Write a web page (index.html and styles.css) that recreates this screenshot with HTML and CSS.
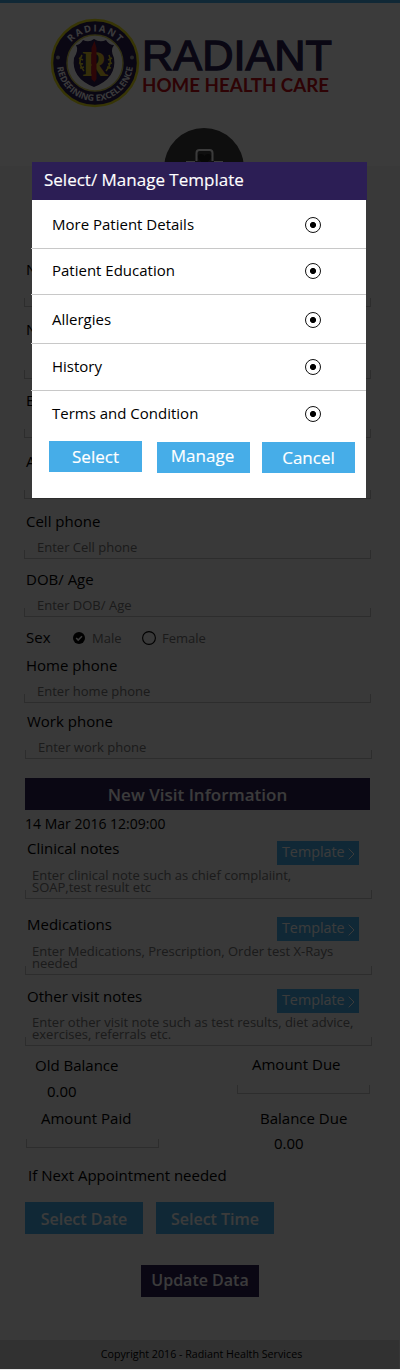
FILE: index.html
```html
<!DOCTYPE html>
<html lang="en">
<head>
<meta charset="utf-8">
<title>Radiant Home Health Care</title>
<link rel="stylesheet" href="styles.css">
</head>
<body>
<div class="page">
  <header class="header">
    <svg class="logo" width="400" height="163" viewBox="0 3 400 163">
      <defs>
        <path id="arc-top" d="M63.500 63a31.500 31.500 0 0 1 63 0"/>
        <path id="arc-bottom" d="M57 63a38 38 0 0 0 76 0"/>
      </defs>
      <circle cx="95" cy="63" r="43" fill="#2c1e55" stroke="#eee51c" stroke-width="2.500"/>
      <circle cx="95" cy="63" r="28" fill="#fff" stroke="#d6cf56" stroke-width="1.500"/>
      <circle cx="58" cy="57.500" r="2" fill="#aaa"/>
      <circle cx="132" cy="57.500" r="2" fill="#aaa"/>
      <text class="seal-text"><textPath href="#arc-top" startOffset="50%" text-anchor="middle" textLength="54">RADIANT</textPath></text>
      <text class="seal-text seal-small"><textPath href="#arc-bottom" startOffset="50%" text-anchor="middle" textLength="111" lengthAdjust="spacingAndGlyphs">REDEFINING EXCELLENCE</textPath></text>
      <path d="M76 45q4 0 7-5q6 3 11-1q6 4 12 1q3 5 8 5q-4 5 0 13q3 20-20 29q-23-9-20-29q5-8 2-13z" fill="#2c1e55"/>
      <path d="M82 55q-5 8 2 16M79 58l4 2M79 63l4 1M80 68l4-1M109 55q4 8-3 16M112 58l-4 2M112 63l-4 1M111 68l-4-1" fill="none" stroke="#e6d52d" stroke-width="1.600"/>
      <text class="seal-r" x="95" y="76" text-anchor="middle">R</text>
      <path d="M94.500 41l2 7v31l-2 3l-3-3V48z" fill="#c01c22"/>
      <text class="brand" x="142" y="70" textLength="190" lengthAdjust="spacingAndGlyphs">RADIANT</text>
      <text class="tagline" x="142" y="92" textLength="187" lengthAdjust="spacingAndGlyphs">HOME HEALTH CARE</text>
      <circle cx="204" cy="168" r="40" fill="#3c3c3c"/>
      <path d="M186 162h9M214 162h9M196.500 161v-8q0-3 3-3h10q3 0 3 3v8" fill="none" stroke="#fff" stroke-width="2"/>
      <path d="M204.500 165l-6-6q-2-5 2.500-5q2.500 0 3.500 2q1-2 3.500-2q4.500 0 2.500 5z" fill="#202020"/>
    </svg>
  </header>

  <main class="form">
    <section class="patient">
      <div class="field"><label>Name</label><div class="input"></div></div>
      <div class="field tall"><label>Name</label><div class="input"></div></div>
      <div class="field"><label>Email</label><div class="input"></div></div>
      <div class="field address"><label>Address</label><div class="input"></div></div>
      <div class="field"><label>Cell phone</label><div class="input">Enter Cell phone</div></div>
      <div class="field"><label>DOB/ Age</label><div class="input">Enter DOB/ Age</div></div>
      <div class="sex">
        <span class="sex-label">Sex</span>
        <svg width="12" height="12" viewBox="0 0 12 12"><circle cx="6" cy="6" r="6"/><path d="M3.200 6l2 2l3.800-3.800" fill="none" stroke="#fff" stroke-width="1.600"/></svg>
        <span class="option male">Male</span>
        <svg width="14" height="14" viewBox="0 0 14 14"><circle cx="7" cy="7" r="6.400" fill="none" stroke="#000" stroke-width="1.100"/></svg>
        <span class="option female">Female</span>
      </div>
      <div class="field home"><label>Home phone</label><div class="input">Enter home phone</div></div>
      <div class="field work"><label>Work phone</label><div class="input">Enter work phone</div></div>
    </section>

    <h2 class="visit-title">New Visit Information</h2>
    <p class="date">14 Mar 2016 12:09:00</p>

    <section class="notes">
      <div class="note">
        <div class="note-head"><span>Clinical notes</span><span class="template">Template<svg width="7" height="12" viewBox="0 0 7 12"><path d="M.7.700L6 6L.7 11.300"/></svg></span></div>
        <div class="textarea">Enter clinical note such as chief complaiint,<br>SOAP,test result etc</div>
      </div>
      <div class="note medications">
        <div class="note-head"><span>Medications</span><span class="template">Template<svg width="7" height="12" viewBox="0 0 7 12"><path d="M.7.700L6 6L.7 11.300"/></svg></span></div>
        <div class="textarea">Enter Medications, Prescription, Order test X-Rays<br>needed</div>
      </div>
      <div class="note other">
        <div class="note-head"><span>Other visit notes</span><span class="template">Template<svg width="7" height="12" viewBox="0 0 7 12"><path d="M.7.700L6 6L.7 11.300"/></svg></span></div>
        <div class="textarea">Enter other visit note such as test results, diet advice,<br>exercises, referrals etc.</div>
      </div>
    </section>

    <section class="balances">
      <div class="column">
        <div class="caption old">Old Balance</div>
        <div class="amount">0.00</div>
        <div class="caption paid">Amount Paid</div>
        <div class="slot"></div>
      </div>
      <div class="column">
        <div class="caption due">Amount Due</div>
        <div class="slot"></div>
        <div class="caption balance">Balance Due</div>
        <div class="amount">0.00</div>
      </div>
    </section>

    <p class="next">If Next Appointment needed</p>
    <div class="pickers"><div class="button">Select Date</div><div class="button">Select Time</div></div>
    <div class="button update">Update Data</div>
  </main>
  <footer class="footer">Copyright 2016 - Radiant Health Services</footer>

  <div class="overlay"></div>
  <div class="modal">
    <h1 class="modal-title">Select/ Manage Template</h1>
    <div class="modal-body">
      <div class="row first"><span>More Patient Details</span><i class="radio"></i></div>
      <div class="row second"><span>Patient Education</span><i class="radio"></i></div>
      <div class="row third"><span>Allergies</span><i class="radio"></i></div>
      <div class="row fourth"><span>History</span><i class="radio"></i></div>
      <div class="row last"><span>Terms and Condition</span><i class="radio"></i></div>
      <div class="actions">
        <div class="action select">Select</div>
        <div class="action manage">Manage</div>
        <div class="action cancel">Cancel</div>
      </div>
    </div>
  </div>
</div>
</body>
</html>
```
FILE: styles.css
```css
* { box-sizing: border-box; }
body { margin: 0; background: #e8e8e8; font-family: "Open Sans", "Noto Sans", sans-serif; color: #000; }
p, h1, h2 { margin: 0; }
.page { position: relative; width: 400px; height: 1370px; overflow: hidden; }
.header { height: 166px; background: #fff; border-top: 3px solid #46ade8; }
.logo { display: block; }
.seal-text { font: bold 9.5px "Open Sans", sans-serif; fill: #fff; }
.seal-small { font-size: 8.8px; }
.seal-r { font: bold 35px "Liberation Serif", serif; fill: #e6c52d; }
.brand { font: 42px "Liberation Sans", sans-serif; fill: #2c1e55; stroke: #2c1e55; stroke-width: 1.3px; }
.tagline { font: bold 18.5px Lato, sans-serif; fill: #c80f16; }

.form { height: 1174px; background: #f4f4f4; padding: 93px 0 0 24px; }
.patient { height: 519px; }
.field { display: flex; flex-direction: column; justify-content: space-between; width: 347px; height: 48px; margin-bottom: 10px; font-size: 15px; line-height: 20px; }
.field label { padding-left: 2px; }
.field:first-child { margin-bottom: 12px; }
.tall { height: 60px; margin-bottom: 11px; }
.field.tall + .field { margin-bottom: 13px; }
.field.address { margin-bottom: 12px; }
.home { margin-bottom: 8px; }
.work { margin-left: 1px; margin-bottom: 0; }
.input { height: 22px; padding-left: 13px; font-size: 13px; line-height: 20px; color: #757575; }
.input, .textarea, .slot {
  border-bottom: 1px solid #c4c4c4;
  background: linear-gradient(#c4c4c4, #c4c4c4) left bottom / 1px 8px no-repeat, linear-gradient(#c4c4c4, #c4c4c4) right bottom / 1px 8px no-repeat;
}
.sex { display: flex; align-items: center; height: 22px; margin-bottom: 6px; padding-left: 2px; font-size: 15px; }
.sex-label { width: 47px; padding-bottom: 2px; }
.option { padding-left: 7px; font-size: 13px; color: #757575; }
.male { width: 57px; }
.female { padding-left: 6px; }

.visit-title { width: 345px; height: 32px; margin-left: 1px; background: #2c1e55; color: #fff; font-size: 17px; font-weight: 600; line-height: 34px; text-align: center; }
.date { height: 28px; padding-left: 1px; font-size: 14px; line-height: 28px; }
.notes { width: 347px; margin-left: 1px; }
.note { height: 76px; }
.note-head { display: flex; justify-content: space-between; height: 26px; padding: 0 13px 0 2px; font-size: 15px; line-height: 20px; }
.template { display: flex; align-items: center; justify-content: space-between; width: 82px; height: 24px; margin-top: 3px; padding: 0 4px 2px 5px; background: #46ade8; color: #fff; font-size: 14.3px; }
.template svg { flex: none; margin-top: 3px; fill: none; stroke: #fff; }
.textarea { width: 347px; height: 35px; padding: 5px 0 0 7px; font-size: 13px; line-height: 12px; color: #757575; }
.medications { height: 72px; }
.other { height: 60px; }
.other .textarea { height: 34px; padding-top: 4px; }
.balances { display: flex; justify-content: space-between; width: 344px; height: 115px; margin-left: 2px; font-size: 15px; line-height: 24px; }
.caption { height: 24px; line-height: 22px; }
.column { width: 133px; }
.column:first-child { padding-top: 8px; }
.column:last-child { padding-top: 7px; }
.old { padding-left: 9px; }
.amount { height: 29px; padding: 1px 0 0 21px; }
.paid { padding-left: 15px; }
.slot { width: 133px; height: 10px; }
.column:first-child .slot { margin-top: 7px; }
.due { padding-left: 15px; }
.column:last-child .slot { margin-top: 7px; }
.balance { margin-top: 13px; padding-left: 23px; }
.column:last-child .amount { padding: 0 0 0 37px; }
.next { height: 41px; padding-left: 4px; font-size: 15px; line-height: 28px; }
.pickers { display: flex; gap: 13px; margin-left: 1px; }
.button { width: 118px; height: 32px; background: #46ade8; color: #fff; font-size: 16px; font-weight: 600; line-height: 35px; text-align: center; }
.update { margin: 31px 0 0 117px; background: #2c1e55; line-height: 31px; }
.footer { width: 399px; height: 29px; background: #d5d5d5; font-size: 10.7px; line-height: 28px; text-align: center; padding-left: 4px; }
.overlay { position: absolute; inset: 0 0 1px; background: rgba(0, 0, 0, .77); }

.modal { position: absolute; left: 32px; top: 162px; width: 335px; }
.modal-title { height: 38px; padding-left: 12px; background: #2c1e55; color: #fff; font-size: 17px; font-weight: 400; line-height: 36px; -webkit-text-stroke: .15px #fff; }
.modal-body { width: 334px; height: 298px; background: #fff; }
.row { display: flex; align-items: center; justify-content: space-between; height: 49px; margin-left: -1px; padding: 1px 45px 0 21px; border-bottom: 1px solid #c8c8c8; font-size: 15px; line-height: 22px; }
.row span { padding-bottom: 2px; }
.second { height: 46px; padding: 0 45px 1px 21px; }
.second span { padding-bottom: 3px; }
.third { height: 49px; padding-top: 2px; }
.third span { padding-bottom: 3px; }
.fourth { height: 47px; padding-top: 0; }
.last { height: 46px; border: 0; padding-top: 0; }
.radio { width: 16px; height: 16px; border: 1px solid #111; border-radius: 50%; background: radial-gradient(circle, #000 2.700px, transparent 3.400px); }
.actions { display: flex; height: 32px; margin-top: 4px; padding-left: 17px; }
.action { width: 93px; height: 31px; margin-top: 1px; background: #46ade8; color: #fff; font-size: 17px; text-align: center; line-height: 32px; -webkit-text-stroke: .15px #fff; }
.select { margin-top: 0; }
.manage { margin-left: 15px; padding-right: 2px; line-height: 28px; }
.cancel { margin-left: 12px; }
```
